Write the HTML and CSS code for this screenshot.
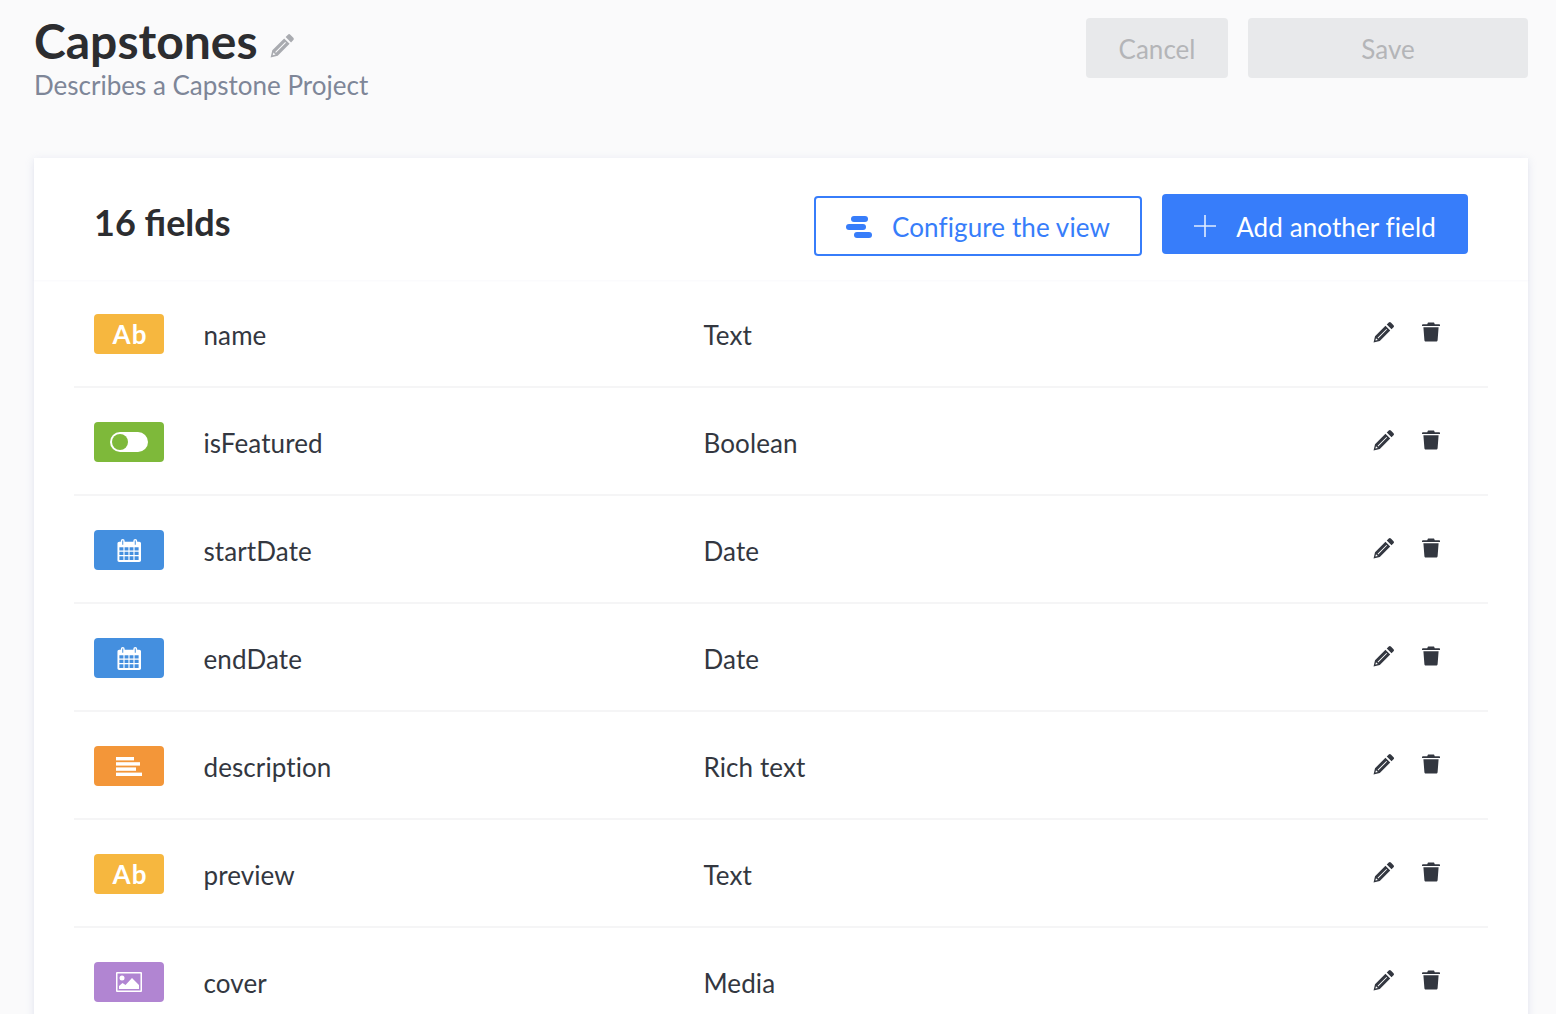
FILE: index.html
```html
<!DOCTYPE html>
<html lang="en">
<head>
  <meta charset="UTF-8" />
  <title>Capstones</title>
  <link rel="stylesheet" href="styles.css">
</head>
<body>

<svg class="sprite" xmlns="http://www.w3.org/2000/svg">
  <symbol id="pencil" viewBox="0 0 24 24">
    <path fill-rule="evenodd" d="M17.2 1.600a1.600 1.600 0 0 1 2.300 0l2.900 2.900a1.600 1.600 0 0 1 0 2.300l-2.200 2.200-5.200-5.200zM13.600 5.200l5.200 5.200L7.400 21.800 0.600 23.400l1.600-6.800zM14.600 8.700l0.700 0.700-9.600 9.600-0.700-0.700zM3.300 18.700l2 2-2.700 0.700z"/>
  </symbol>
  <symbol id="trash" viewBox="0 0 18 20">
    <path d="M6 0.500h6l0.800 1.700H17c0.600 0 1 0.400 1 0.900v0.900H0v-0.900c0-0.500 0.400-0.900 1-0.900h4.200zM1.400 5.200h15.200l-1 13c-0.100 0.800-0.700 1.300-1.400 1.300H3.800c-0.700 0-1.300-0.500-1.400-1.300z"/>
  </symbol>
  <symbol id="calendar" viewBox="0 0 26 26">
    <path fill="#fff" fill-rule="evenodd" d="M6.500 1a2 2 0 0 1 2 2v1h9V3a2 2 0 0 1 4 0v1h2.200c1 0 1.800 0.800 1.800 1.800v17.400c0 1-0.800 1.800-1.800 1.800H2.800C1.800 25 1 24.200 1 23.200V5.800C1 4.800 1.800 4 2.800 4h1.700V3a2 2 0 0 1 2-2zM6 2.500V7h1V2.500zM19 2.500V7h1V2.500zM3 9.500v3.500h4.200V9.500zM8.400 9.500v3.500h4V9.500zM13.600 9.500v3.500h4V9.500zM18.800 9.500v3.500H23V9.500zM3 14.200v3.600h4.200v-3.600zM8.400 14.200v3.600h4v-3.600zM13.600 14.200v3.600h4v-3.600zM18.800 14.200v3.600H23v-3.600zM3 19v4h4.200v-4zM8.400 19v4h4v-4zM13.600 19v4h4v-4zM18.800 19v4H23v-4z"/>
  </symbol>
  <symbol id="richtext" viewBox="0 0 26 19">
    <rect width="18" height="3.400" y="0" fill="#fff"/>
    <rect width="24" height="3.400" y="5.200" fill="#fff"/>
    <rect width="20" height="3.400" y="10.400" fill="#fff"/>
    <rect width="26" height="3.400" y="15.600" fill="#fff"/>
  </symbol>
  <symbol id="media" viewBox="0 0 26 20">
    <path fill="#fff" fill-rule="evenodd" d="M1 0h24a1 1 0 0 1 1 1v18a1 1 0 0 1-1 1H1a1 1 0 0 1-1-1V1a1 1 0 0 1 1-1zM1.500 1.500v17h23v-17z"/>
    <circle cx="6" cy="6" r="2.500" fill="#fff"/>
    <path fill="#fff" d="M3 17v-3l3.500-3 3 2 6.500-7 7 7v4z"/>
  </symbol>
</svg>

<header class="page-head">
  <div class="page-title">
    <h1>Capstones <svg class="title-edit"><use href="#pencil"/></svg></h1>
    <p>Describes a Capstone Project</p>
  </div>
  <div class="page-actions">
    <button class="btn btn-off btn-cancel">Cancel</button>
    <button class="btn btn-off btn-save">Save</button>
  </div>
</header>

<main class="card">
  <div class="card-head">
    <h2>16 fields</h2>
    <div class="card-actions">
      <button class="btn btn-outline">
        <svg class="btn-icon" viewBox="0 0 26 22">
          <rect x="5" y="0" width="17" height="6" rx="3" fill="#377dfa"/>
          <rect x="0" y="8" width="20" height="6" rx="3" fill="#377dfa"/>
          <rect x="8" y="16" width="18" height="6" rx="3" fill="#377dfa"/>
        </svg>
        Configure the view
      </button>
      <button class="btn btn-primary">
        <svg class="btn-icon-plus" viewBox="0 0 22 22">
          <path d="M11 0v22M0 11h22" stroke="#fff" stroke-width="1.600" fill="none" opacity="0.85"/>
        </svg>
        Add another field
      </button>
    </div>
  </div>

  <div class="field-row">
    <span class="badge badge-text">Ab</span>
    <span class="field-name">name</span>
    <span class="field-type">Text</span>
    <span class="field-actions"><svg class="act-edit"><use href="#pencil"/></svg><svg class="act-del"><use href="#trash"/></svg></span>
  </div>
  <div class="field-row">
    <span class="badge badge-bool"><span class="toggle"></span></span>
    <span class="field-name">isFeatured</span>
    <span class="field-type">Boolean</span>
    <span class="field-actions"><svg class="act-edit"><use href="#pencil"/></svg><svg class="act-del"><use href="#trash"/></svg></span>
  </div>
  <div class="field-row">
    <span class="badge badge-date"><svg class="ico-cal"><use href="#calendar"/></svg></span>
    <span class="field-name">startDate</span>
    <span class="field-type">Date</span>
    <span class="field-actions"><svg class="act-edit"><use href="#pencil"/></svg><svg class="act-del"><use href="#trash"/></svg></span>
  </div>
  <div class="field-row">
    <span class="badge badge-date"><svg class="ico-cal"><use href="#calendar"/></svg></span>
    <span class="field-name">endDate</span>
    <span class="field-type">Date</span>
    <span class="field-actions"><svg class="act-edit"><use href="#pencil"/></svg><svg class="act-del"><use href="#trash"/></svg></span>
  </div>
  <div class="field-row">
    <span class="badge badge-rich"><svg class="ico-rich"><use href="#richtext"/></svg></span>
    <span class="field-name">description</span>
    <span class="field-type">Rich text</span>
    <span class="field-actions"><svg class="act-edit"><use href="#pencil"/></svg><svg class="act-del"><use href="#trash"/></svg></span>
  </div>
  <div class="field-row">
    <span class="badge badge-text">Ab</span>
    <span class="field-name">preview</span>
    <span class="field-type">Text</span>
    <span class="field-actions"><svg class="act-edit"><use href="#pencil"/></svg><svg class="act-del"><use href="#trash"/></svg></span>
  </div>
  <div class="field-row">
    <span class="badge badge-media"><svg class="ico-media"><use href="#media"/></svg></span>
    <span class="field-name">cover</span>
    <span class="field-type">Media</span>
    <span class="field-actions"><svg class="act-edit"><use href="#pencil"/></svg><svg class="act-del"><use href="#trash"/></svg></span>
  </div>
</main>

</body>
</html>
```

FILE: styles.css
```css
* {
  box-sizing: border-box;
}

html, body {
  height: 1014px;
  overflow: hidden;
}

body {
  margin: 0;
  padding: 0 28px 0 34px;
  font-family: Lato, sans-serif;
  background: #fafafb;
  color: #2c2d30;
}

.sprite {
  display: none;
}

.page-head {
  display: flex;
  justify-content: space-between;
  height: 158px;
  padding-top: 18px;
}

.page-title h1 {
  margin: 0;
  font-size: 48px;
  line-height: 46px;
  font-weight: 700;
  color: #2c2d30;
  display: flex;
  align-items: center;
  gap: 12px;
}

.title-edit {
  width: 25px;
  height: 25px;
  fill: #a9abb0;
  margin-top: 9px;
}

.page-title p {
  margin: 5px 0 0;
  font-size: 26px;
  line-height: 32px;
  color: #7e8698;
}

.page-actions {
  display: flex;
  gap: 20px;
}

.btn {
  height: 60px;
  border: 0;
  border-radius: 4px;
  font-family: inherit;
  font-size: 26px;
  letter-spacing: 0.1px;
  display: flex;
  align-items: center;
  justify-content: center;
  padding: 2px 0 0;
}

.btn-off {
  background: #e8e9eb;
  color: #b4b5b8;
  letter-spacing: 0;
}

.btn-cancel {
  width: 142px;
}

.btn-save {
  width: 280px;
}

.card {
  background: #fff;
  height: 900px;
  box-shadow: 0 2px 8px rgba(170, 180, 215, 0.3);
}

.card-head {
  height: 122px;
  padding: 10px 60px 0;
  display: flex;
  align-items: center;
  justify-content: space-between;
  box-shadow: 0 1px 2px rgba(230, 232, 240, 0.25);
}

.card-head h2 {
  margin: -4px 0 0;
  font-size: 36px;
  font-weight: 700;
  color: #2c2d30;
}

.card-actions {
  display: flex;
  gap: 20px;
  align-items: center;
}

.btn-outline {
  width: 328px;
  background: #fff;
  border: 2px solid #377dfa;
  color: #377dfa;
  gap: 20px;
  margin-top: 4px;
}

.btn-icon {
  width: 26px;
  height: 22px;
}

.btn-primary {
  width: 306px;
  background: #377dfa;
  color: #fff;
  gap: 20px;
  padding-top: 6px;
}

.btn-icon-plus {
  width: 22px;
  height: 22px;
  margin-top: -2px;
}

.field-row {
  height: 108px;
  margin: 0 40px;
  padding: 4px 20px 0;
  display: flex;
  align-items: center;
  border-bottom: 2px solid #f5f5f6;
  font-size: 26px;
  letter-spacing: 0.1px;
  color: #333740;
}

.badge {
  width: 70px;
  height: 40px;
  border-radius: 4px;
  display: flex;
  align-items: center;
  justify-content: center;
  color: #fff;
  font-size: 26px;
  font-weight: 700;
  letter-spacing: 1.2px;
  margin-top: -2px;
}

.badge-text {
  background: #f6b73f;
  padding-left: 2px;
}

.badge-bool { background: #7eb93a; }
.badge-date { background: #448fdf; }
.badge-rich { background: #f39639; }
.badge-media { background: #b185d2; }

.toggle {
  width: 38px;
  height: 20px;
  border-radius: 10px;
  background: #fff;
  display: flex;
  padding: 2px;
}

.toggle::before {
  content: "";
  width: 16px;
  height: 16px;
  border-radius: 50%;
  background: #7eb93a;
}

.ico-cal {
  width: 26px;
  height: 25px;
}

.ico-rich {
  width: 26px;
  height: 19px;
}

.ico-media {
  width: 26px;
  height: 20px;
}

.field-name {
  width: 500px;
  margin-left: 39.5px;
}

.field-type {
  flex: 1;
}

.field-actions {
  display: flex;
  align-items: center;
  gap: 27px;
  margin-right: 28px;
  margin-top: -6px;
}

.act-edit {
  width: 22px;
  height: 22px;
  fill: #333740;
}

.act-del {
  width: 18px;
  height: 20px;
  fill: #333740;
}
```
